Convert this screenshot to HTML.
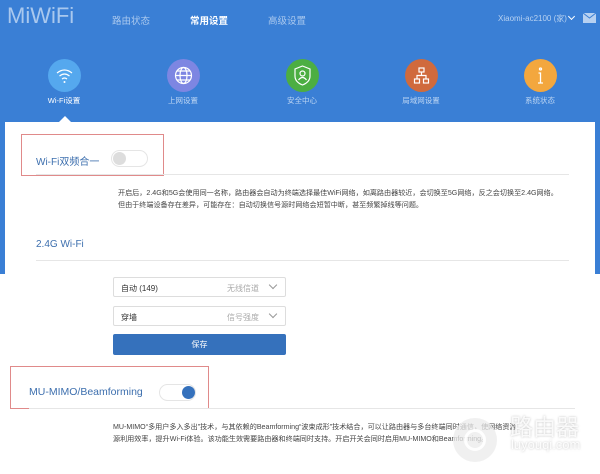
<!DOCTYPE html>
<html><head><meta charset="utf-8"><style>
*{margin:0;padding:0;box-sizing:border-box}
body{width:600px;height:474px;overflow:hidden;background:#fff;font-family:"Liberation Sans","Noto Sans CJK SC",sans-serif;position:relative}
.abs{position:absolute}
.top{left:0;top:0;width:600px;height:274px;background:#3a7fd5}
.panel{left:5px;top:122px;width:590px;height:152px;background:#fff}
.nav{top:13px;font-size:9.5px;color:#a9c8ee}
.ic{width:33px;height:33px;border-radius:50%;top:59px}
.lbl{top:95px;font-size:7.5px;color:#bcd5f3;width:80px;text-align:center}
.desc{font-size:7.1px;color:#444;line-height:12px}
.sel{left:113px;width:173px;height:20px;border:1px solid #ddd;border-radius:2px;font-size:8px;color:#333;padding:5px 7px}
.sel span{position:absolute;right:26px;top:5px;color:#aaa}
.sel i{position:absolute;right:9px;top:4px;width:6px;height:6px;border-right:1px solid #999;border-bottom:1px solid #999;transform:rotate(45deg)}
</style></head><body>
<div class="abs top"></div>
<div class="abs" style="left:7px;top:3px;font-size:22px;color:#a9c8ee;font-weight:300">MiWiFi</div>
<div class="abs nav" style="left:112px">路由状态</div>
<div class="abs nav" style="left:190px;color:#fff;font-weight:bold">常用设置</div>
<div class="abs nav" style="left:268px">高级设置</div>
<div class="abs" style="left:498px;top:13px;font-size:8px;color:#b7d1f1">Xiaomi-ac2100 (家)</div>
<div class="abs" style="left:569px;top:14px;width:5px;height:5px;border-right:1.5px solid #fff;border-bottom:1.5px solid #fff;transform:rotate(45deg)"></div>
<div class="abs" style="left:583px;top:13px;width:13px;height:10px;background:#b7d1f1"></div>
<svg class="abs" style="left:583px;top:13px" width="13" height="10"><path d="M0 0 L6.5 5 L13 0" stroke="#3a7fd5" fill="none"/></svg>

<div class="abs ic" style="left:48px;background:#55a8ee"></div>
<svg class="abs" style="left:48px;top:59px" width="33" height="33"><g stroke="#fff" fill="none" stroke-width="1.2"><path d="M9 14 Q16.5 8 24 14"/><path d="M11.5 17 Q16.5 13 21.5 17"/><path d="M14 20 Q16.5 18 19 20"/></g><circle cx="16.5" cy="23" r="1" fill="#fff"/></svg>
<div class="abs ic" style="left:167px;background:#7d86e2"></div>
<svg class="abs" style="left:167px;top:59px" width="33" height="33"><g stroke="#fff" fill="none" stroke-width="1.2"><circle cx="16.5" cy="16.5" r="8"/><ellipse cx="16.5" cy="16.5" rx="3.5" ry="8"/><path d="M8.5 16.5H24.5M10 12H23M10 21H23"/></g></svg>
<div class="abs ic" style="left:286px;background:#4cae42"></div>
<svg class="abs" style="left:286px;top:59px" width="33" height="33"><g stroke="#fff" fill="none" stroke-width="1.2"><path d="M16.5 7 L24 10 V17 Q24 23 16.5 26 Q9 23 9 17 V10 Z"/><circle cx="16.5" cy="14.5" r="2.5"/><path d="M12.5 21 Q16.5 16 20.5 21"/></g></svg>
<div class="abs ic" style="left:405px;background:#d06a3d"></div>
<svg class="abs" style="left:405px;top:59px" width="33" height="33"><g stroke="#fff" fill="none" stroke-width="1.2"><rect x="14" y="9" width="5" height="4"/><rect x="9.5" y="20" width="5" height="4"/><rect x="18.5" y="20" width="5" height="4"/><path d="M16.5 13V16.5M12 20V16.5H21V20"/></g></svg>
<div class="abs ic" style="left:524px;background:#f3a73e"></div>
<svg class="abs" style="left:524px;top:59px" width="33" height="33"><g stroke="#fff" fill="none" stroke-width="1.3"><circle cx="16.5" cy="10" r="1"/><path d="M14.5 14H16.5V24M14 24H19"/></g></svg>

<div class="abs lbl" style="left:24px;color:#fff">Wi-Fi设置</div>
<div class="abs lbl" style="left:143px">上网设置</div>
<div class="abs lbl" style="left:262px">安全中心</div>
<div class="abs lbl" style="left:381px">局域网设置</div>
<div class="abs lbl" style="left:500px">系统状态</div>

<div class="abs panel"></div>
<div class="abs" style="left:59px;top:116px;width:0;height:0;border-left:6px solid transparent;border-right:6px solid transparent;border-bottom:6px solid #fff"></div>

<div class="abs" style="left:21px;top:134px;width:143px;height:42px;border:1px solid #e08a8a"></div>
<div class="abs" style="left:36px;top:153px;font-size:10px;color:#3d6fae">Wi-Fi双频合一</div>
<div class="abs" style="left:111px;top:150px;width:37px;height:17px;border:1px solid #e5e5e5;border-radius:9px;background:#fff"></div>
<div class="abs" style="left:113px;top:152px;width:13px;height:13px;border-radius:50%;background:#ddd"></div>
<div class="abs" style="left:36px;top:174px;width:533px;height:1px;background:#e6e6e6"></div>
<div class="abs desc" style="left:118px;top:187px;width:460px">开启后，2.4G和5G会使用同一名称，路由器会自动为终端选择最佳WiFi网络，如离路由器较近，会切换至5G网络，反之会切换至2.4G网络。<br>但由于终端设备存在差异，可能存在：自动切换信号源时网络会短暂中断，甚至频繁掉线等问题。</div>
<div class="abs" style="left:36px;top:239px;font-size:10px;color:#3d6fae">2.4G Wi-Fi</div>
<div class="abs" style="left:36px;top:260px;width:533px;height:1px;background:#e6e6e6"></div>

<div class="abs sel" style="top:277px">自动 (149)<span>无线信道</span><i></i></div>
<div class="abs sel" style="top:306px">穿墙<span>信号强度</span><i></i></div>
<div class="abs" style="left:113px;top:334px;width:173px;height:21px;background:#3571bc;border-radius:2px;color:#fff;font-size:8px;text-align:center;line-height:21px">保存</div>

<div class="abs" style="left:10px;top:366px;width:199px;height:43px;border:1px solid #e08a8a"></div>
<div class="abs" style="left:29px;top:386px;font-size:10.5px;color:#3d6fae">MU-MIMO/Beamforming</div>
<div class="abs" style="left:159px;top:384px;width:37px;height:17px;border:1px solid #e5e5e5;border-radius:9px;background:#fff"></div>
<div class="abs" style="left:182px;top:386px;width:13px;height:13px;border-radius:50%;background:#3571bc"></div>
<div class="abs" style="left:29px;top:408px;width:546px;height:1px;background:#e6e6e6"></div>
<div class="abs desc" style="left:113px;top:421px;width:470px">MU-MIMO“多用户多入多出”技术，与其依赖的Beamforming“波束成形”技术结合，可以让路由器与多台终端同时通信，使网络资源<br>源利用效率，提升Wi-Fi体验。该功能生效需要路由器和终端同时支持。开启开关会同时启用MU-MIMO和Beamforming。</div>

<div class="abs" style="left:453px;top:418px;width:44px;height:44px;border-radius:50%;background:rgba(235,235,235,0.75)"></div>
<div class="abs" style="left:464px;top:429px;width:22px;height:22px;border-radius:50%;border:3px solid rgba(255,255,255,0.9)"></div>
<div class="abs" style="left:510px;top:408px;font-size:23px;color:rgba(255,255,255,0.85);text-shadow:0 0 2px rgba(150,150,150,0.6)">路由器</div>
<div class="abs" style="left:511px;top:437px;font-size:13px;color:rgba(255,255,255,0.9);text-shadow:0 0 2px rgba(150,150,150,0.6)">luyouqi.com</div>
</body></html>
